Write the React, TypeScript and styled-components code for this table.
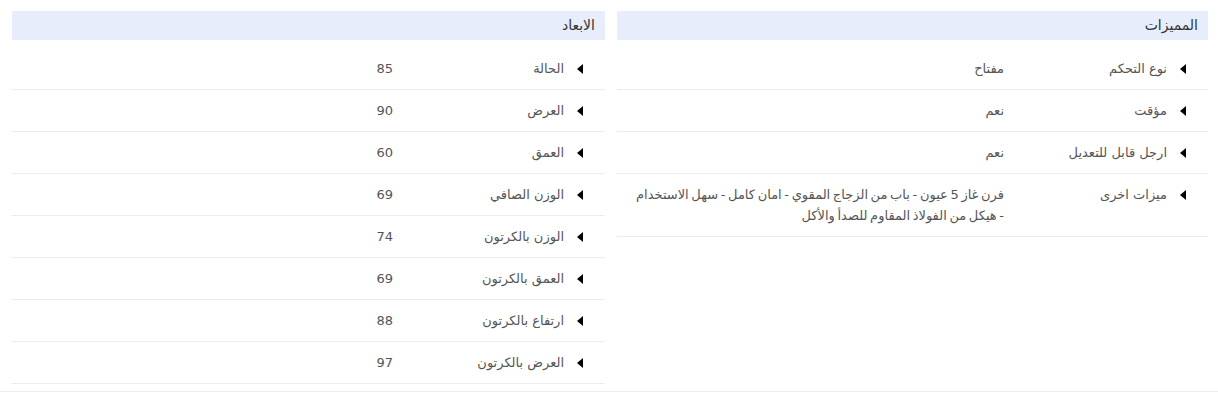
import React from 'react';
import styled, { createGlobalStyle } from 'styled-components';

interface SpecItem {
  label: string;
  value: string;
}

interface SpecSection {
  title: string;
  labelWidth: number;
  items: SpecItem[];
}

const sections: SpecSection[] = [
  {
    title: 'المميزات',
    labelWidth: 182,
    items: [
      { label: 'نوع التحكم', value: 'مفتاح' },
      { label: 'مؤقت', value: 'نعم' },
      { label: 'ارجل قابل للتعديل', value: 'نعم' },
      {
        label: 'ميزات اخرى',
        value:
          'فرن غاز 5 عيون - باب من الزجاج المقوي - امان كامل - سهل الاستخدام - هيكل من الفولاذ المقاوم للصدأ والأكل',
      },
    ],
  },
  {
    title: 'الابعاد',
    labelWidth: 190,
    items: [
      { label: 'الحالة', value: '85' },
      { label: 'العرض', value: '90' },
      { label: 'العمق', value: '60' },
      { label: 'الوزن الصافي', value: '69' },
      { label: 'الوزن بالكرتون', value: '74' },
      { label: 'العمق بالكرتون', value: '69' },
      { label: 'ارتفاع بالكرتون', value: '88' },
      { label: 'العرض بالكرتون', value: '97' },
    ],
  },
];

const GlobalStyle = createGlobalStyle`
  html, body {
    margin: 0;
    padding: 0;
    background: #fff;
  }
  body {
    font-family: "DejaVu Sans", "Noto Sans", sans-serif;
  }
`;

const Page = styled.div`
  direction: rtl;
  width: 1218px;
  box-sizing: border-box;
  padding: 11px 10px 7px 13px;
  border-bottom: 1px solid #eeeeee;
  display: grid;
  grid-template-columns: 591px 593px;
  column-gap: 12px;
  align-items: start;
`;

const Section = styled.section`
  display: flex;
  flex-direction: column;
`;

const SectionHeader = styled.h3`
  margin: 0;
  height: 29px;
  line-height: 29px;
  padding: 0 10px;
  background: #e8edfc;
  color: #333;
  font-size: 14px;
  font-weight: normal;
`;

const List = styled.ul`
  list-style: none;
  margin: 0;
  padding: 8px 0 0;
`;

const Row = styled.li`
  display: flex;
  align-items: flex-start;
  padding: 10px 0;
  border-bottom: 1px solid #ececec;
  font-size: 13px;
  line-height: 21px;
  color: #555;
`;

const Label = styled.div<{ $width: number }>`
  flex: 0 0 ${props => props.$width}px;
  display: flex;
  align-items: center;
  gap: 13px;
  padding-right: 22px;
`;

const Arrow = styled.span`
  width: 0;
  height: 0;
  border-top: 5px solid transparent;
  border-bottom: 5px solid transparent;
  border-right: 6px solid #000;
`;

const Value = styled.div`
  flex: 1;
  padding-left: 18px;
  word-spacing: -1.5px;
`;

const App: React.FC = () => (
  <>
    <GlobalStyle />
    <Page>
      {sections.map(section => (
        <Section key={section.title}>
          <SectionHeader>{section.title}</SectionHeader>
          <List>
            {section.items.map(item => (
              <Row key={item.label}>
                <Label $width={section.labelWidth}>
                  <Arrow />
                  <span>{item.label}</span>
                </Label>
                <Value>{item.value}</Value>
              </Row>
            ))}
          </List>
        </Section>
      ))}
    </Page>
  </>
);

export default App;
